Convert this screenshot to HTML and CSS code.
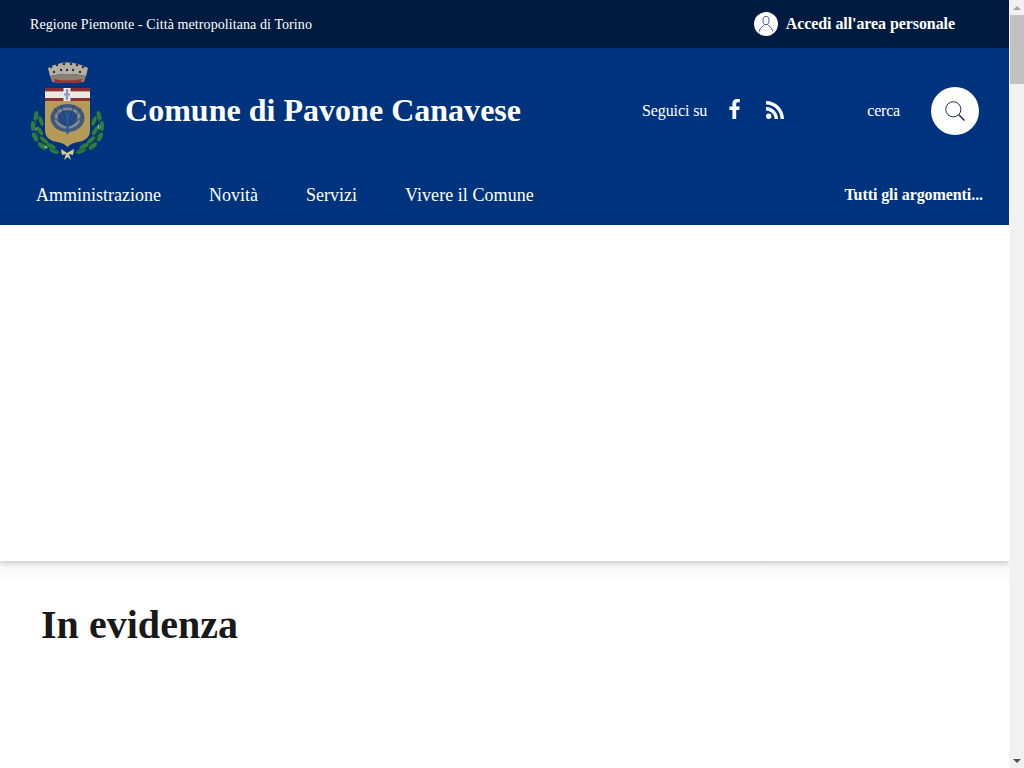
FILE: index.html
```html
<!DOCTYPE html>
<html lang="it">
<head>
<meta charset="utf-8">
<title>Comune di Pavone Canavese</title>
<link rel="stylesheet" href="styles.css">
</head>
<body>
<div class="page">
<div class="topbar">
  <div class="region">Regione Piemonte - Città metropolitana di Torino</div>
  <a class="login" href="#">
    <span class="avatar">
      <svg width="16" height="18" viewBox="0 0 16 18" fill="none" stroke="#33406e" stroke-width="0.9">
        <ellipse cx="8" cy="5.5" rx="3" ry="4.2"/>
        <path d="M6.4 9.3 C6 11 2 12 1.2 16.5 M9.6 9.3 C10 11 14 12 14.8 16.5"/>
      </svg>
    </span>
    <span>Accedi all'area personale</span>
  </a>
</div>
<header class="header">
  <div class="brand-row">
    <a class="brand" href="#">
      <svg class="crest" width="76" height="100" viewBox="0 0 76 100">
        <path d="M18 7 Q37 -4 58 7 L56 15 Q37 11 20 15 Z" fill="#b4b0a6"/>
        <path d="M20 15 Q37 11 56 15 L54 21 Q37 23 22 21 Z" fill="#8d7f70"/>
        <g fill="#2f3038"><circle cx="21" cy="6" r="1.3"/><circle cx="27" cy="4" r="1.3"/><circle cx="34" cy="3" r="1.3"/><circle cx="41" cy="3" r="1.3"/><circle cx="47" cy="4" r="1.3"/><circle cx="53" cy="6" r="1.3"/><circle cx="24" cy="11" r="1.2"/><circle cx="31" cy="9" r="1.2"/><circle cx="37" cy="9" r="1.2"/><circle cx="43" cy="9" r="1.2"/><circle cx="50" cy="11" r="1.2"/></g>
        <path d="M24 18 Q37 21 52 18 L51 21 Q37 23 25 21 Z" fill="#9b3028"/>
        <path d="M15 27 H60 V70 Q60 79 48 81 Q41 82 37.5 86 Q34 82 27 81 Q15 79 15 70 Z" fill="#b59a58"/>
        <rect x="15" y="27" width="45" height="3.5" fill="#8d2f35"/>
        <rect x="15" y="30.5" width="45" height="6.5" fill="#ece8e2"/>
        <rect x="15" y="37" width="45" height="3" fill="#8d2f35"/>
        <rect x="33.5" y="27" width="7" height="13" fill="#e8e8ee"/>
        <path d="M37 28 V39 M34 33.5 H40" stroke="#8d97b8" stroke-width="2.2"/>
        <ellipse cx="37.5" cy="57" rx="17" ry="14" fill="#44597a"/>
        <ellipse cx="37.5" cy="57" rx="13" ry="10.5" fill="#7d8b90"/>
        <ellipse cx="37.5" cy="57" rx="10" ry="8" fill="#2f4d85"/>
        <g stroke="#1d3565" stroke-width="0.7"><path d="M37.5 66 L21 55 M37.5 66 L24 47 M37.5 66 L31 44 M37.5 66 L44 44 M37.5 66 L51 47 M37.5 66 L54 55"/></g>
        <path d="M37.5 52 V73" stroke="#1a5fb0" stroke-width="2.4"/>
        <g fill="#2f7d3d">
          <ellipse cx="6" cy="55" rx="2.2" ry="5" transform="rotate(12 6 55)"/>
          <ellipse cx="11" cy="60" rx="2" ry="5" transform="rotate(-20 11 60)"/>
          <ellipse cx="3" cy="65" rx="2.2" ry="5"/>
          <ellipse cx="10" cy="70" rx="2" ry="5" transform="rotate(-30 10 70)"/>
          <ellipse cx="5" cy="76" rx="2.2" ry="5" transform="rotate(-25 5 76)"/>
          <ellipse cx="14" cy="79" rx="2" ry="5" transform="rotate(-50 14 79)"/>
          <ellipse cx="12" cy="85" rx="2.2" ry="5" transform="rotate(-50 12 85)"/>
          <ellipse cx="21" cy="85" rx="2" ry="5" transform="rotate(-65 21 85)"/>
          <ellipse cx="24" cy="90" rx="2" ry="5" transform="rotate(-70 24 90)"/>
          <ellipse cx="69" cy="55" rx="2.2" ry="5" transform="rotate(-12 69 55)"/>
          <ellipse cx="64" cy="60" rx="2" ry="5" transform="rotate(20 64 60)"/>
          <ellipse cx="72" cy="65" rx="2.2" ry="5"/>
          <ellipse cx="65" cy="70" rx="2" ry="5" transform="rotate(30 65 70)"/>
          <ellipse cx="70" cy="76" rx="2.2" ry="5" transform="rotate(25 70 76)"/>
          <ellipse cx="61" cy="79" rx="2" ry="5" transform="rotate(50 61 79)"/>
          <ellipse cx="63" cy="85" rx="2.2" ry="5" transform="rotate(50 63 85)"/>
          <ellipse cx="54" cy="85" rx="2" ry="5" transform="rotate(65 54 85)"/>
          <ellipse cx="51" cy="90" rx="2" ry="5" transform="rotate(70 51 90)"/>
        </g>
        <g fill="#9fc9a0"><ellipse cx="69" cy="66" rx="1.5" ry="2.4"/><ellipse cx="6" cy="68" rx="1" ry="2"/><ellipse cx="16" cy="86" rx="1" ry="2" transform="rotate(-50 16 86)"/></g>
        <path d="M6 58 Q3 72 14 83 Q22 90 33 92 M69 58 Q72 72 61 83 Q53 90 42 92" fill="none" stroke="#1f5c2e" stroke-width="1"/>
        <path d="M31 88 L37 92 L44 88 L43 94 L39 93 L41 99 L37.5 96 L34 99 L36 93 L32 94 Z" fill="#d8cc9c"/>
      </svg>
      <span class="site-name">Comune di Pavone Canavese</span>
    </a>
    <div class="tools">
      <span class="follow">Seguici su</span>
      <a class="social social-fb" href="#" aria-label="Facebook">
        <svg width="12" height="20" viewBox="0 0 12 20" fill="#fff"><path d="M3.4 20 V11 H0.4 V7.5 H3.4 V4.8 C3.4 1.7 5.2 0 8 0 C9.3 0 10.5 0.1 10.8 0.15 V3.3 H9 C7.5 3.3 7.2 4 7.2 5 V7.5 H10.7 L10.2 11 H7.2 V20 Z"/></svg>
      </a>
      <a class="social social-rss" href="#" aria-label="RSS">
        <svg width="18" height="18" viewBox="0 0 18 18" fill="#fff"><circle cx="2.7" cy="15.3" r="2.7"/><path d="M0 6 V9.4 C4.8 9.4 8.6 13.2 8.6 18 H12 C12 11.4 6.6 6 0 6 Z"/><path d="M0 0 V3.4 C8.1 3.4 14.6 9.9 14.6 18 H18 C18 8.1 9.9 0 0 0 Z"/></svg>
      </a>
      <span class="search-label">cerca</span>
      <a class="search-btn" href="#" aria-label="cerca">
        <svg width="22" height="22" viewBox="0 0 22 22" fill="none" stroke="#1b2c4f" stroke-width="1"><circle cx="9.3" cy="9.3" r="7.6"/><path d="M14.8 14.8 L20.5 20.5" stroke-width="1.5"/></svg>
      </a>
    </div>
  </div>
  <nav class="nav">
    <div class="nav-main">
      <a href="#">Amministrazione</a>
      <a href="#">Novità</a>
      <a href="#">Servizi</a>
      <a class="nav-last" href="#">Vivere il Comune</a>
    </div>
    <a class="nav-all" href="#">Tutti gli argomenti...</a>
  </nav>
</header>
<div class="hero"></div>
<main class="highlights">
  <h2>In evidenza</h2>
</main>
</div>
<div class="scrollbar" aria-hidden="true">
  <div class="sb-btn"><span class="sb-arrow-up"></span></div>
  <div class="sb-track"><div class="sb-thumb"></div></div>
  <div class="sb-btn"><span class="sb-arrow-down"></span></div>
</div>
</body>
</html>
```
FILE: styles.css
```css
* { box-sizing: border-box; }
html, body { height: 100%; }
body {
  margin: 0;
  display: flex;
  overflow: hidden;
  font-family: "Liberation Serif", "Times New Roman", serif;
  color: #191919;
  background: #fff;
}
a { color: #fff; text-decoration: none; }
.page { flex: 1; min-width: 0; overflow: hidden; }

.topbar {
  height: 48px;
  background: #001b3f;
  color: #fff;
  display: flex;
  align-items: center;
  justify-content: space-between;
  padding: 1px 54px 0 30px;
}
.region { font-size: 14px; letter-spacing: 0.085px; }
.login {
  display: flex;
  align-items: center;
  gap: 8px;
  font-size: 16px;
  font-weight: 700;
  letter-spacing: -0.08px;
  margin-top: -1px;
}
.avatar {
  width: 24px;
  height: 24px;
  border-radius: 50%;
  background: #fff;
  display: flex;
  align-items: center;
  justify-content: center;
}

.header { height: 177px; background: #00337d; color: #fff; }
.brand-row {
  height: 125px;
  display: flex;
  align-items: center;
  justify-content: space-between;
  padding: 0 30px;
}
.brand { display: flex; align-items: center; gap: 19px; }
.site-name { font-size: 32px; font-weight: 700; letter-spacing: 0.02px; }
.tools { display: flex; align-items: center; font-size: 16px; }
.follow { letter-spacing: -0.1px; }
.social { display: flex; align-items: center; }
.social-fb { margin-left: 22px; margin-bottom: 3px; }
.social-rss { margin-left: 25px; margin-bottom: 1px; }
.search-label { margin-left: 83px; letter-spacing: -0.2px; }
.search-btn {
  margin-left: 31px;
  width: 48px;
  height: 48px;
  border-radius: 50%;
  background: #fff;
  display: flex;
  align-items: center;
  justify-content: center;
}

.nav {
  display: flex;
  align-items: center;
  justify-content: space-between;
  height: 44px;
  padding: 0 26px 0 36px;
}
.nav-main { display: flex; gap: 48px; font-size: 18px; }
.nav-last { letter-spacing: 0.06px; }
.nav-all { font-size: 16px; font-weight: 700; letter-spacing: -0.08px; }

.hero {
  height: 336px;
  background: #fff;
  box-shadow: 0 2px 6px rgba(0, 0, 0, 0.2);
  position: relative;
}
.highlights {
  height: 207px;
  padding: 40px 41px;
  background: linear-gradient(#f7f7f7, #fff 24px);
}
.highlights h2 {
  margin: 0;
  font-size: 40px;
  line-height: 48px;
  font-weight: 700;
  letter-spacing: 0.03px;
}

.scrollbar {
  flex: 0 0 15px;
  display: flex;
  flex-direction: column;
  background: #f1f1f1;
  border-left: 1px solid #f8f8f8;
}
.sb-btn {
  height: 15px;
  display: flex;
  align-items: center;
  justify-content: center;
}
.sb-track { flex: 1; }
.sb-thumb { height: 69px; background: #c1c1c1; }
.sb-arrow-up, .sb-arrow-down {
  width: 0;
  height: 0;
  border-left: 4px solid transparent;
  border-right: 4px solid transparent;
}
.sb-arrow-up { border-bottom: 4px solid #a3a3a3; }
.sb-arrow-down { border-top: 4px solid #505050; }
```
